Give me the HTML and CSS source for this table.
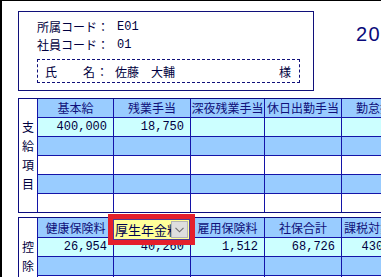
FILE: index.html
```html
<!DOCTYPE html>
<html lang="ja">
<head>
<meta charset="utf-8">
<link rel="stylesheet" href="styles.css">
</head>
<body>
<div class="frame">
  <div class="top">
    <div class="idbox">
      <div class="line"><span class="lbl">所属コード：</span><span class="val">E01</span></div>
      <div class="line"><span class="lbl">社員コード：</span><span class="val">01</span></div>
      <div class="namebox">
        <span class="n1">氏</span><span class="n2">名</span><span class="colon">：</span><span class="name">佐藤　大輔</span><span class="sama">様</span>
      </div>
    </div>
    <div class="date">2019年 3月分</div>
  </div>

  <div class="grid g1">
    <div class="side"><span>支</span><span>給</span><span>項</span><span>目</span><span></span></div>
    <div class="h">基本給</div><div class="h">残業手当</div><div class="h">深夜残業手当</div><div class="h">休日出勤手当</div><div class="h">勤怠控除</div>
    <div class="c r1">400,000</div><div class="c r1">18,750</div><div class="c r1"></div><div class="c r1"></div><div class="c r1"></div>
    <div class="c r2"></div><div class="c r2"></div><div class="c r2"></div><div class="c r2"></div><div class="c r2"></div>
    <div class="c r3"></div><div class="c r3"></div><div class="c r3"></div><div class="c r3"></div><div class="c r3"></div>
    <div class="c r2"></div><div class="c r2"></div><div class="c r2"></div><div class="c r2"></div><div class="c r2"></div>
    <div class="c r3"></div><div class="c r3"></div><div class="c r3"></div><div class="c r3"></div><div class="c r3"></div>
  </div>

  <div class="grid g2">
    <div class="side side2"><span>控</span><span>除</span><span></span></div>
    <div class="h">健康保険料</div>
    <div class="h hsel">
      <div class="dropdown">
        <span class="dtext">厚生年金料</span>
        <span class="dbtn"><svg width="9" height="6" viewBox="0 0 9 6"><path d="M0.5 0.8 L4.5 4.8 L8.5 0.8" fill="none" stroke="#6b6b6b" stroke-width="1.1"/></svg></span>
      </div>
    </div>
    <div class="h">雇用保険料</div><div class="h">社保合計</div><div class="h htight">課税対象金額</div>
    <div class="c r1">26,954</div><div class="c r1">40,260</div><div class="c r1">1,512</div><div class="c r1">68,726</div><div class="c r1">430,740</div>
    <div class="c r2"></div><div class="c r2"></div><div class="c r2"></div><div class="c r2"></div><div class="c r2"></div>
    <div class="c r3"></div><div class="c r3"></div><div class="c r3"></div><div class="c r3"></div><div class="c r3"></div>
  </div>
</div>
</body>
</html>
```

FILE: styles.css
```css
html, body {
  margin: 0;
  padding: 0;
  background: #ffffff;
  overflow: hidden;
}
body {
  width: 381px;
  height: 277px;
  font-family: "Noto Sans CJK JP", "Liberation Sans", sans-serif;
  font-size: 12px;
  color: #000040;
}
.frame {
  height: 276px;
  border-top: 1px solid #000000;
  border-left: 2px solid #000000;
  overflow: hidden;
}
.top {
  display: flex;
  align-items: flex-start;
}
.idbox {
  box-sizing: border-box;
  flex: none;
  width: 296px;
  height: 80px;
  margin: 10px 0 0 16px;
  padding: 6px 0 0 18px;
  border: 1px solid #10107a;
}
.line {
  display: flex;
  height: 18px;
  line-height: 18px;
  white-space: nowrap;
}
.lbl {
  width: 80px;
}
.val {
  font-family: "Liberation Mono", monospace;
  font-size: 12px;
}
.namebox {
  box-sizing: border-box;
  display: flex;
  align-items: center;
  width: 263px;
  height: 24px;
  margin-top: 5px;
  padding: 1px 8px 0 7px;
  border: 1px dashed #10107a;
  white-space: nowrap;
}
.n2 { margin-left: 26px; }
.colon { margin-left: 1px; }
.name { margin-left: 7px; }
.sama { margin-left: auto; }
.date {
  flex: none;
  margin: 22px 0 0 42px;
  font-family: "Liberation Sans", sans-serif;
  font-size: 20px;
  line-height: 23px;
  letter-spacing: 1.5px;
  color: #0a0a7a;
  white-space: nowrap;
}

.grid {
  display: grid;
  width: max-content;
  grid-template-columns: 18px 75px 76px 73px 76px 76px;
  gap: 1px;
  margin-left: 16px;
  background: #1414a8;
  border: 1px solid #0c0c80;
}
.g1 {
  margin-top: 7px;
  grid-template-rows: repeat(6, 18px);
}
.g2 {
  margin-top: 4px;
  grid-template-rows: 19px 18px 18px 18px;
}
.side {
  grid-row: 1 / -1;
  grid-column: 1;
  background: #ffffff;
  display: grid;
  grid-auto-rows: 18px;
  row-gap: 1px;
  padding-top: 19px;
  justify-items: center;
  align-items: center;
  line-height: 18px;
  color: #000040;
}
.side2 { padding-top: 20px; }
.h {
  background: #99ccff;
  color: #10107a;
  text-align: center;
  line-height: 18px;
  white-space: nowrap;
  overflow: hidden;
}
.g2 .h { line-height: 20px; }
.htight { text-align: left; padding-left: 2px; }
.hsel { overflow: visible; }
.c {
  font-family: "Liberation Mono", monospace;
  font-size: 12px;
  line-height: 18px;
  text-align: right;
  padding-right: 6px;
  color: #000040;
  white-space: nowrap;
  overflow: hidden;
}
.r1 { background: #ccffff; }
.r2 { background: #99ccff; }
.r3 { background: #ffffff; }

.dropdown {
  position: relative;
  z-index: 2;
  box-sizing: border-box;
  display: flex;
  align-items: center;
  width: 77px;
  height: 21px;
  margin: 1px 0 0 -1px;
  padding: 0 1px 0 1px;
  background: #ffff99;
  border: 1px solid #4a3a9a;
  outline: 5px solid #e4202c;
  text-align: left;
}
.dtext {
  flex: 1;
  overflow: hidden;
  white-space: nowrap;
  font-size: 13px;
  line-height: 19px;
  color: #000050;
}
.dbtn {
  flex: none;
  box-sizing: border-box;
  display: flex;
  align-items: center;
  justify-content: center;
  width: 17px;
  height: 17px;
  background: #dedede;
  border: 1px solid #b4b4b4;
}
```
